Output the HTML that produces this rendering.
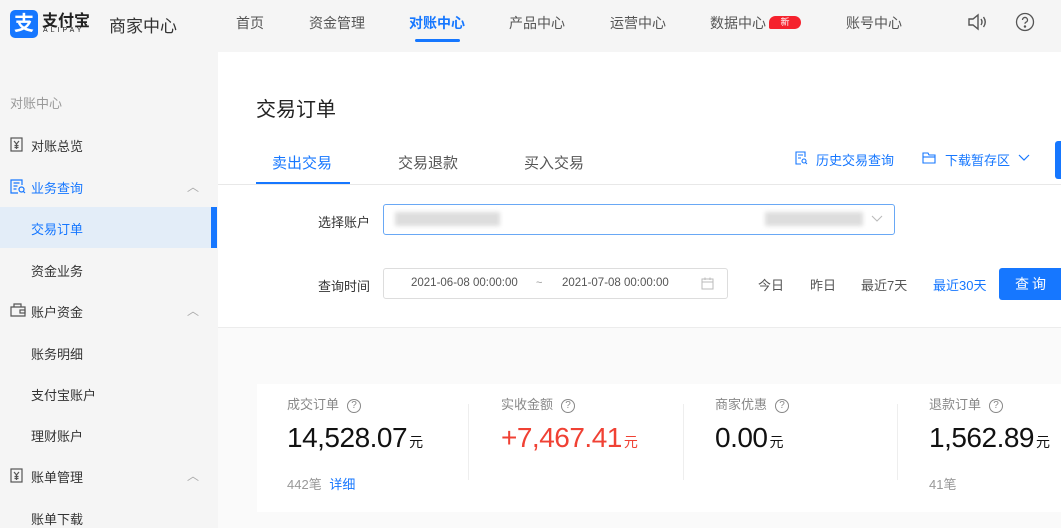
<!DOCTYPE html>
<html><head><meta charset="utf-8"><style>
*{margin:0;padding:0;box-sizing:border-box}
body{width:1061px;height:528px;overflow:hidden;background:#f5f5f5;font-family:"Liberation Sans","Noto Sans CJK SC",sans-serif;color:#333;position:relative}
.a{position:absolute;white-space:nowrap}
.nav{font-size:14px;color:#555;top:13px}
.side{font-size:13px;color:#333}
.blue{color:#1677ff}
.stat-l{font-size:13px;color:#888;top:394px}
.num{font-size:28px;color:#111;top:422px;letter-spacing:-0.5px}
.num small{font-size:14px;margin-left:2px}
.q{display:inline-block;width:14px;height:14px;border:1px solid #888;border-radius:50%;font-size:10px;text-align:center;line-height:12px;margin-left:8px;vertical-align:1px}
svg.i{position:absolute}
</style></head><body>
<!-- header -->
<div class="a" style="left:10px;top:10px;width:28px;height:28px;background:#1677ff;border-radius:5px;color:#fff;font-size:20px;text-align:center;line-height:28px;font-weight:bold">支</div>
<div class="a" style="left:42px;top:7px;font-size:16px;font-weight:bold;color:#222">支付宝</div>
<div class="a" style="left:43px;top:27px;font-size:7px;letter-spacing:3px;color:#222">ALIPAY</div>
<div class="a" style="left:109px;top:12px;font-size:17px;color:#333">商家中心</div>
<div class="a nav" style="left:236px">首页</div>
<div class="a nav" style="left:309px">资金管理</div>
<div class="a nav" style="left:409px;color:#1677ff;font-weight:bold">对账中心</div>
<div class="a" style="left:415px;top:39px;width:45px;height:3px;background:#1677ff;border-radius:2px"></div>
<div class="a nav" style="left:509px">产品中心</div>
<div class="a nav" style="left:610px">运营中心</div>
<div class="a nav" style="left:710px">数据中心</div>
<div class="a" style="left:769px;top:16px;width:32px;height:13px;background:#f5222d;border-radius:7px 7px 7px 2px;color:#fff;font-size:9px;text-align:center;line-height:13px">新</div>
<div class="a nav" style="left:846px">账号中心</div>
<svg class="a" style="left:967px;top:12px" width="22" height="20" viewBox="0 0 22 20" fill="none" stroke="#555" stroke-width="1.4"><path d="M2 7h4l5-4v14l-5-4H2z"/><path d="M14 7q2 3 0 6M16.5 5q3.5 5 0 10"/></svg>
<svg class="a" style="left:1015px;top:12px" width="20" height="20" viewBox="0 0 20 20" fill="none" stroke="#555" stroke-width="1.3"><circle cx="10" cy="10" r="8.5"/><path d="M7.5 8a2.5 2.5 0 1 1 3.3 2.3c-.6.3-.8.7-.8 1.5"/><circle cx="10" cy="14.5" r=".6" fill="#555"/></svg>
<!-- sidebar -->
<div class="a side" style="left:10px;top:93px;color:#999">对账中心</div>
<svg class="i" style="left:10px;top:137px" width="14" height="15" viewBox="0 0 14 15" fill="none" stroke="#555" stroke-width="1.2"><rect x="1" y="1" width="11" height="13"/><path d="M4 4l2.5 3L9 4M6.5 7v5M4.5 8.5h4M4.5 10.5h4"/></svg>
<div class="a side" style="left:31px;top:136px">对账总览</div>
<svg class="i" style="left:10px;top:179px" width="16" height="15" viewBox="0 0 16 15" fill="none" stroke="#1677ff" stroke-width="1.2"><path d="M12 6V1H1v13h7"/><path d="M3.5 4h6M3.5 7h4M3.5 10h3"/><circle cx="11.5" cy="10.5" r="2.5"/><path d="M13.3 12.3l1.7 1.7"/></svg>
<div class="a side blue" style="left:31px;top:178px">业务查询</div>
<div class="a" style="left:187px;top:178px;color:#aaa;font-size:12px">︿</div>
<div class="a" style="left:0;top:207px;width:217px;height:41px;background:#e3edf8"></div>
<div class="a" style="left:211px;top:207px;width:6px;height:41px;background:#1677ff"></div>
<div class="a side blue" style="left:31px;top:219px">交易订单</div>
<div class="a side" style="left:31px;top:261px">资金业务</div>
<svg class="i" style="left:10px;top:303px" width="16" height="14" viewBox="0 0 16 14" fill="none" stroke="#555" stroke-width="1.2"><path d="M1 4h14v9H1z"/><path d="M4 4V1h7v3"/><rect x="10" y="7" width="5" height="3"/></svg>
<div class="a side" style="left:31px;top:302px">账户资金</div>
<div class="a" style="left:187px;top:302px;color:#aaa;font-size:12px">︿</div>
<div class="a side" style="left:31px;top:344px">账务明细</div>
<div class="a side" style="left:31px;top:385px">支付宝账户</div>
<div class="a side" style="left:31px;top:426px">理财账户</div>
<svg class="i" style="left:10px;top:468px" width="14" height="15" viewBox="0 0 14 15" fill="none" stroke="#555" stroke-width="1.2"><rect x="1" y="1" width="11" height="13"/><path d="M4 4l2.5 3L9 4M6.5 7v5M4.5 8.5h4M4.5 10.5h4"/></svg>
<div class="a side" style="left:31px;top:467px">账单管理</div>
<div class="a" style="left:187px;top:467px;color:#aaa;font-size:12px">︿</div>
<div class="a side" style="left:31px;top:509px">账单下载</div>
<!-- main -->
<div class="a" style="left:218px;top:52px;width:843px;height:476px;background:#fff"></div>
<div class="a" style="left:256px;top:93px;font-size:20px;color:#222">交易订单</div>
<div class="a" style="left:272px;top:152px;font-size:15px;color:#1677ff">卖出交易</div>
<div class="a" style="left:398px;top:152px;font-size:15px;color:#555">交易退款</div>
<div class="a" style="left:524px;top:152px;font-size:15px;color:#555">买入交易</div>
<div class="a" style="left:218px;top:184px;width:843px;height:1px;background:#e8e8e8"></div>
<div class="a" style="left:256px;top:182px;width:94px;height:2px;background:#1677ff"></div>
<svg class="i" style="left:795px;top:151px" width="13" height="14" viewBox="0 0 13 14" fill="none" stroke="#1677ff" stroke-width="1.1"><path d="M10 6V1H1v12h5"/><path d="M3 4h5M3 7h3"/><circle cx="9" cy="10" r="2"/><path d="M10.5 11.5l1.5 1.5"/></svg>
<div class="a blue" style="left:816px;top:150px;font-size:13px">历史交易查询</div>
<svg class="i" style="left:922px;top:152px" width="15" height="12" viewBox="0 0 15 12" fill="none" stroke="#1677ff" stroke-width="1.1"><path d="M1 1h5l1 2h6v8H1z"/><path d="M1 5h12"/></svg>
<div class="a blue" style="left:945px;top:150px;font-size:13px">下载暂存区</div>
<svg class="i" style="left:1018px;top:154px" width="12" height="8" viewBox="0 0 12 8" fill="none" stroke="#1677ff" stroke-width="1.2"><path d="M1 1l5 5 5-5"/></svg>
<div class="a" style="left:1055px;top:141px;width:6px;height:38px;background:#1677ff;border-radius:3px 0 0 3px"></div>
<div class="a" style="left:318px;top:212px;font-size:13px">选择账户</div>
<div class="a" style="left:383px;top:204px;width:512px;height:31px;border:1px solid #69a8f5;border-radius:3px"></div>
<div class="a" style="left:395px;top:212px;width:105px;height:14px;background:#ddd;filter:blur(2px)"></div>
<div class="a" style="left:765px;top:212px;width:98px;height:14px;background:#ddd;filter:blur(2px)"></div>
<svg class="i" style="left:871px;top:215px" width="12" height="8" viewBox="0 0 12 8" fill="none" stroke="#bbb" stroke-width="1.1"><path d="M1 1l5 5 5-5"/></svg>
<div class="a" style="left:318px;top:276px;font-size:13px">查询时间</div>
<div class="a" style="left:383px;top:268px;width:345px;height:31px;border:1px solid #ddd;border-radius:3px"></div>
<div class="a" style="left:411px;top:277px;font-size:11.5px;color:#555">2021-06-08 00:00:00</div>
<div class="a" style="left:536px;top:277px;font-size:11px;color:#999">~</div>
<div class="a" style="left:562px;top:277px;font-size:11.5px;color:#555">2021-07-08 00:00:00</div>
<svg class="i" style="left:701px;top:277px" width="13" height="13" viewBox="0 0 13 13" fill="none" stroke="#bbb" stroke-width="1"><rect x="1" y="2" width="11" height="10"/><path d="M1 5h11M4 0.5v2.5M9 0.5v2.5"/></svg>
<div class="a" style="left:758px;top:275px;font-size:13px;color:#555">今日</div>
<div class="a" style="left:810px;top:275px;font-size:13px;color:#555">昨日</div>
<div class="a" style="left:861px;top:275px;font-size:13px;color:#555">最近7天</div>
<div class="a blue" style="left:933px;top:275px;font-size:13px">最近30天</div>
<div class="a" style="left:999px;top:268px;width:62px;height:32px;background:#1677ff;border-radius:3px 0 0 3px;color:#fff;font-size:14px;line-height:32px;padding-left:16px;letter-spacing:3px">查询</div>
<div class="a" style="left:218px;top:327px;width:843px;height:1px;background:#ececec"></div>
<div class="a" style="left:218px;top:328px;width:843px;height:200px;background:#fafafa"></div>
<div class="a" style="left:257px;top:384px;width:804px;height:128px;background:#fff"></div>
<div class="a" style="left:468px;top:404px;width:1px;height:76px;background:#eee"></div>
<div class="a" style="left:683px;top:404px;width:1px;height:76px;background:#eee"></div>
<div class="a" style="left:897px;top:404px;width:1px;height:76px;background:#eee"></div>
<div class="a stat-l" style="left:287px">成交订单<span class="q">?</span></div>
<div class="a stat-l" style="left:501px">实收金额<span class="q">?</span></div>
<div class="a stat-l" style="left:715px">商家优惠<span class="q">?</span></div>
<div class="a stat-l" style="left:929px">退款订单<span class="q">?</span></div>
<div class="a num" style="left:287px">14,528.07<small>元</small></div>
<div class="a num" style="left:501px;color:#f04134">+7,467.41<small>元</small></div>
<div class="a num" style="left:715px">0.00<small>元</small></div>
<div class="a num" style="left:929px">1,562.89<small>元</small></div>
<div class="a" style="left:287px;top:474px;font-size:13px;color:#999">442笔 <span class="blue" style="margin-left:4px">详细</span></div>
<div class="a" style="left:929px;top:474px;font-size:13px;color:#999">41笔</div>
</body></html>
